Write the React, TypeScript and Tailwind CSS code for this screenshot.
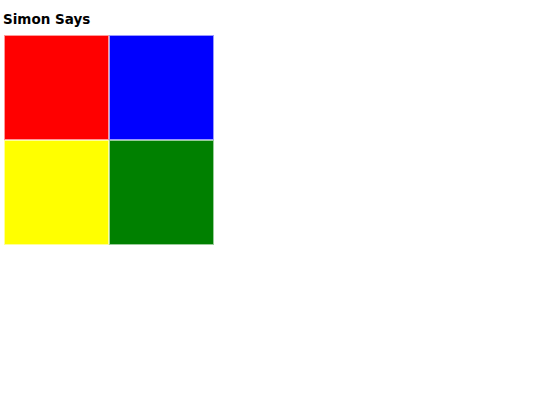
const pads = [
  { name: "red", cls: "bg-[#ff0000]" },
  { name: "blue", cls: "bg-[#0000ff]" },
  { name: "yellow", cls: "bg-[#ffff00]" },
  { name: "green", cls: "bg-[#008000]" },
];

export default function App() {
  return (
    <div className="min-h-[405px] bg-white px-[4px] pt-[8px] font-['DejaVu_Sans',sans-serif] text-black">
      <h1 className="mb-[5px] -ml-px text-[13.5px] leading-[22px] font-bold">Simon Says</h1>
      <div className="grid w-[210px] grid-cols-[105px_105px]">
        {pads.map((p) => (
          <div
            key={p.name}
            className={`h-[105px] w-[105px] border border-white/60 ${p.cls}`}
          />
        ))}
      </div>
    </div>
  );
}
